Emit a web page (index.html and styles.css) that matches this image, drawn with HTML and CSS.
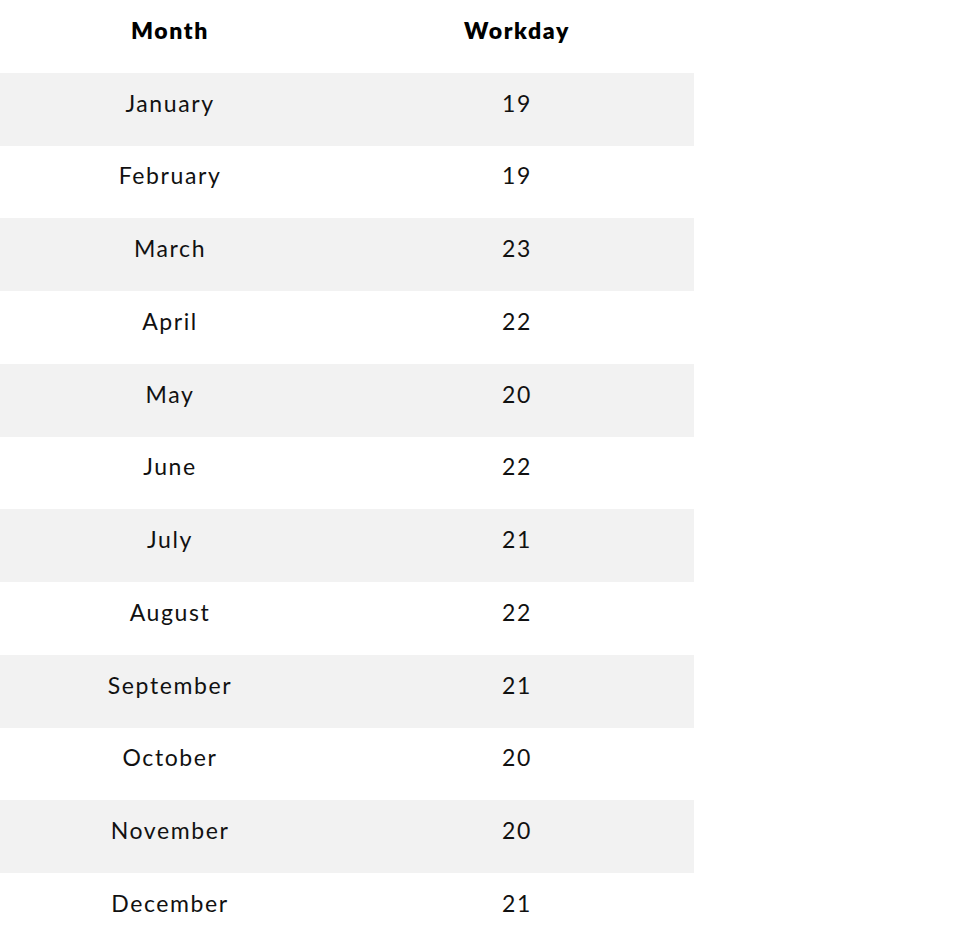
FILE: index.html
```html
<!DOCTYPE html>
<html>
<head>
<meta charset="utf-8">
<link rel="stylesheet" href="styles.css">
</head>
<body>
<table class="days">
  <thead>
    <tr><th class="c1">Month</th><th class="c2">Workday</th></tr>
  </thead>
  <tbody>
    <tr><td>January</td><td>19</td></tr>
    <tr><td>February</td><td>19</td></tr>
    <tr><td>March</td><td>23</td></tr>
    <tr><td>April</td><td>22</td></tr>
    <tr><td>May</td><td>20</td></tr>
    <tr><td>June</td><td>22</td></tr>
    <tr><td>July</td><td>21</td></tr>
    <tr><td>August</td><td>22</td></tr>
    <tr><td>September</td><td>21</td></tr>
    <tr><td>October</td><td>20</td></tr>
    <tr><td>November</td><td>20</td></tr>
    <tr><td>December</td><td>21</td></tr>
  </tbody>
</table>
</body>
</html>
```
FILE: styles.css
```css
html, body { margin: 0; padding: 0; background: #fff; }
body { font-family: "Lato", "Liberation Sans", sans-serif; color: #111; }
.days { border-collapse: collapse; width: 694px; table-layout: fixed; }
.days th, .days td {
  height: 72.75px;
  padding: 0 0 13px 0;
  box-sizing: border-box;
  text-align: center;
  vertical-align: middle;
  font-size: 23px;
  letter-spacing: 1.6px;
}
.days th { font-weight: 800; color: #000; letter-spacing: 1.6px; }
.days .c1 { width: 340px; }
.days tbody tr:nth-child(odd) { background: #f2f2f2; }
```
